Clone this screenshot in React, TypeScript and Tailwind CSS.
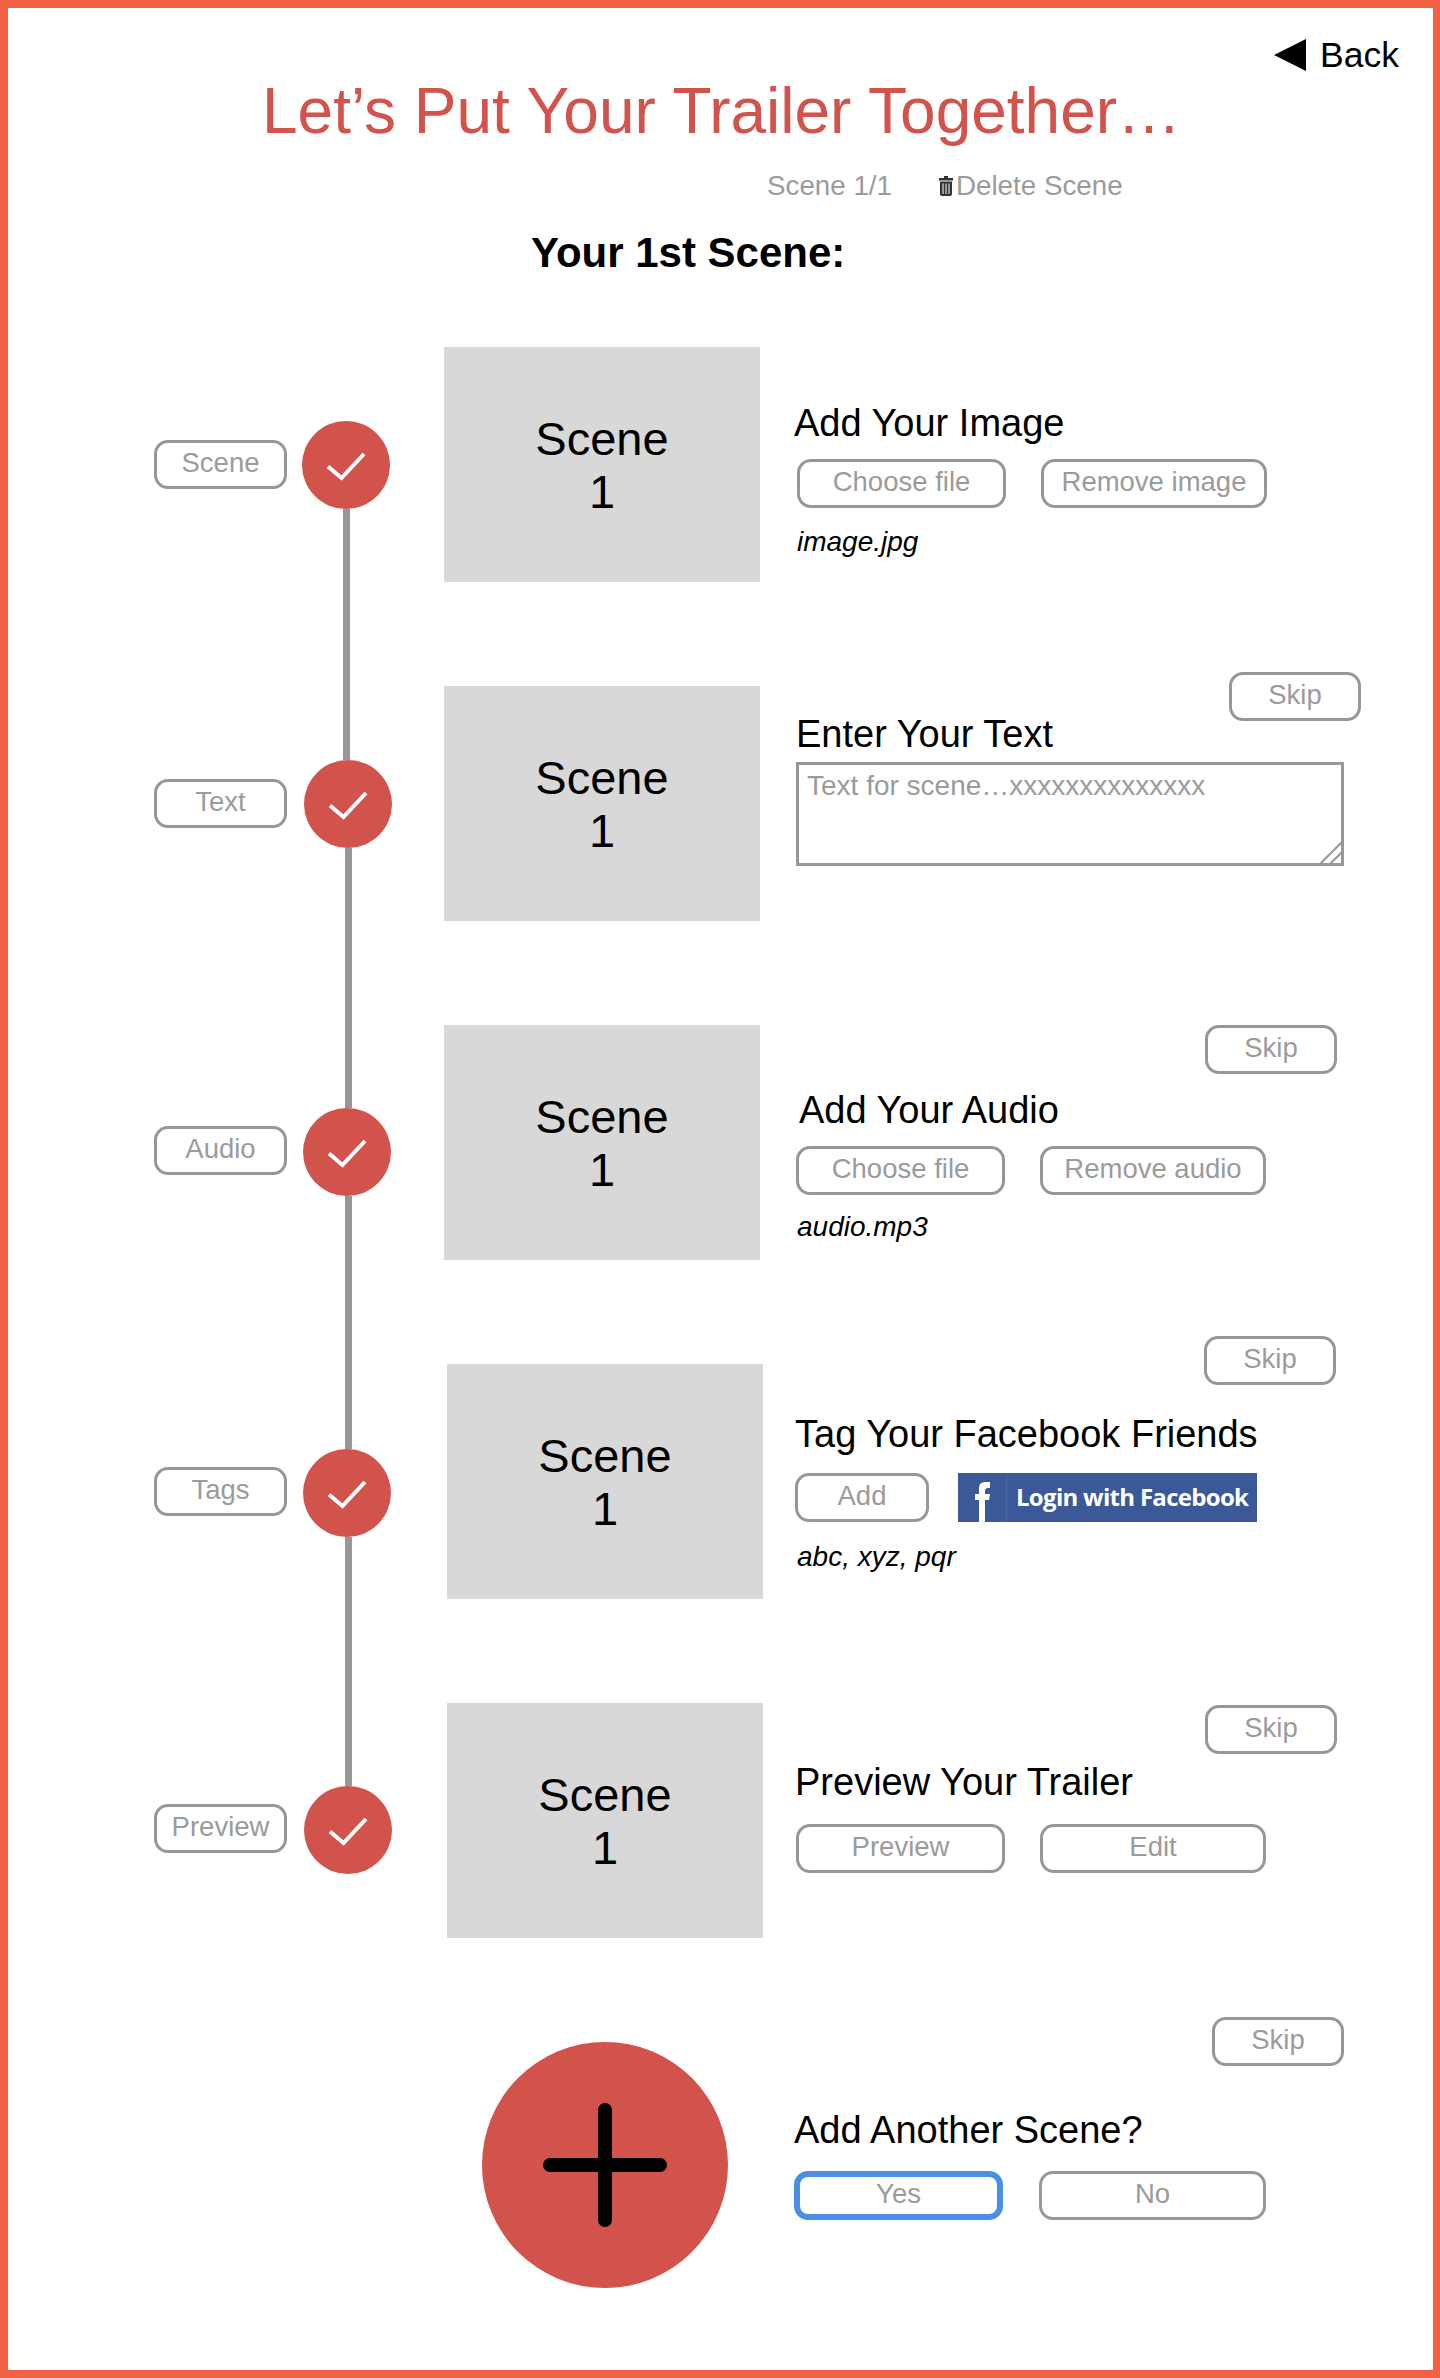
import type { ReactNode } from "react";

function Btn({ className = "border-[3px] border-[#979797] pb-[3px]", width, children }: { className?: string; width: string; children: ReactNode }) {
  return (
    <button className={`flex h-[49px] shrink-0 items-center justify-center rounded-[14px] text-[27.5px] leading-none text-[#9b9b9b] ${width} ${className}`}>
      {children}
    </button>
  );
}

function Heading({ className = "", children }: { className?: string; children: ReactNode }) {
  return <h3 className={`text-[38px] leading-[35px] whitespace-nowrap text-black ${className}`}>{children}</h3>;
}

function FileName({ className = "", children }: { className?: string; children: ReactNode }) {
  return <p className={`text-[28px] leading-[28px] italic text-black ${className}`}>{children}</p>;
}

function Thumb({ className = "" }: { className?: string }) {
  return (
    <div className={`flex h-[235px] w-[316px] shrink-0 flex-col items-center justify-center bg-[#d8d8d8] text-[47px] leading-[53px] text-black ${className}`}>
      <span>Scene</span>
      <span>1</span>
    </div>
  );
}

// the grey line shifts 2px sideways after the second circle, same as the mockup
function Step({ label, pillTop, lineTop, lineBottom = "ml-[43px]", circleClass = "", last }: { label: string; pillTop: string; lineTop: string; lineBottom?: string; circleClass?: string; last?: boolean }) {
  return (
    <>
      <div className={`ml-[146px] flex h-[49px] w-[133px] shrink-0 items-center justify-center rounded-[14px] border-[3px] border-[#979797] pb-[3px] text-[27.5px] leading-none text-[#9b9b9b] ${pillTop}`}>
        {label}
      </div>
      <div className="ml-[15px] flex h-[339px] w-[88px] shrink-0 flex-col">
        <div className={`w-[7px] shrink-0 ${lineTop}`} />
        <div className={`h-[88px] w-[88px] shrink-0 rounded-full bg-[#d2524c] ${circleClass}`}>
          <svg viewBox="0 0 88 88" className="h-[88px] w-[88px]">
            <path d="M26 45.5 L39.5 57 L62 33" fill="none" stroke="#fff" strokeWidth="4" />
          </svg>
        </div>
        {!last && <div className={`w-[7px] flex-1 bg-[#979797] ${lineBottom}`} />}
      </div>
    </>
  );
}

export default function App() {
  return (
    <div className="h-[2378px] w-full overflow-hidden border-t-8 border-r-[7px] border-b-8 border-l-8 border-[#f26144] bg-white font-['Liberation_Sans',Arial,sans-serif]">
      <header className="pt-[29px]">
        <div className="flex items-center justify-end pr-[34px]">
          <svg viewBox="0 0 32 32" className="mr-[14px] h-[32px] w-[32px]">
            <polygon points="0,16 32,0 32,32" fill="#000" />
          </svg>
          <span className="text-[35.5px] leading-[36px] text-black">Back</span>
        </div>
        <h1 className="mt-[6px] ml-[254px] text-[64px] leading-[64px] whitespace-nowrap text-[#d2524c]">Let’s Put Your Trailer Together…</h1>
        <div className="mt-[29px] ml-[759px] flex items-center text-[27.75px] leading-[28px] text-[#9b9b9b]">
          <span>Scene 1/1</span>
          <svg viewBox="0 0 14 20" className="mr-[3px] ml-[47px] h-[20px] w-[14px]">
            <path d="M5 0h4v2h5v2.5H0V2h5z" fill="#333" />
            <path d="M1 5.5h12V18a2 2 0 0 1-2 2H3a2 2 0 0 1-2-2z" fill="#333" />
            <path d="M4 7.5v10.5M7 7.5v10.5M10 7.5v10.5" stroke="#fff" strokeWidth="1" />
          </svg>
          <span>Delete Scene</span>
        </div>
        <h2 className="mt-[33px] ml-[523px] text-[42px] leading-[40px] font-bold text-black">Your 1st Scene:</h2>
      </header>

      <main className="mt-[74px]">
        <section className="flex h-[339px] items-start">
          <Step label="Scene" pillTop="mt-[93px]" lineTop="h-[74px]" lineBottom="ml-[41px]" />
          <Thumb className="ml-[54px]" />
          <div className="mt-[59px] ml-[34px]">
            <Heading>Add Your Image</Heading>
            <div className="mt-[18px] ml-[3px] flex">
              <Btn width="w-[209px]">Choose file</Btn>
              <Btn width="ml-[35px] w-[226px]">Remove image</Btn>
            </div>
            <FileName className="mt-[20px] ml-[3px]">image.jpg</FileName>
          </div>
        </section>

        <section className="flex h-[339px] items-start">
          <Step label="Text" pillTop="mt-[93px]" lineTop="ml-[41px] h-[74px] bg-[#979797]" circleClass="translate-x-[2px]" />
          <Thumb className="ml-[54px]" />
          <div className="-mt-[14px] ml-[36px]">
            <Btn width="ml-[433px] w-[132px]">Skip</Btn>
            <Heading className="-mt-[4px]">Enter Your Text</Heading>
            <div className="relative mt-[10px] h-[104px] w-[548px] border-[3px] border-[#979797] px-[8px] pt-[5px] text-[28px] leading-[32px] text-[#9b9b9b]">
              Text for scene…xxxxxxxxxxxxxx
              <svg viewBox="0 0 26 26" className="absolute -right-[3px] -bottom-[3px] h-[26px] w-[26px]">
                <path d="M0 26 L26 0 M10 26 L26 10" stroke="#979797" strokeWidth="2" />
              </svg>
            </div>
          </div>
        </section>

        <section className="flex h-[339px] items-start">
          <Step label="Audio" pillTop="mt-[101px]" lineTop="ml-[43px] h-[83px] bg-[#979797]" circleClass="translate-x-[1px]" />
          <Thumb className="ml-[54px]" />
          <div className="ml-[39px]">
            <Btn width="ml-[406px] w-[132px]">Skip</Btn>
            <Heading className="mt-[19px]">Add Your Audio</Heading>
            <div className="mt-[18px] -ml-[3px] flex">
              <Btn width="w-[209px]">Choose file</Btn>
              <Btn width="ml-[35px] w-[226px]">Remove audio</Btn>
            </div>
            <FileName className="mt-[18px] -ml-[2px]">audio.mp3</FileName>
          </div>
        </section>

        <section className="flex h-[339px] items-start">
          <Step label="Tags" pillTop="mt-[103px]" lineTop="ml-[43px] h-[85px] bg-[#979797]" circleClass="translate-x-[1px]" />
          <Thumb className="ml-[57px]" />
          <div className="-mt-[28px] ml-[32px]">
            <Btn width="ml-[409px] w-[132px]">Skip</Btn>
            <Heading className="mt-[32px]">Tag Your Facebook Friends</Heading>
            <div className="mt-[21px] flex">
              <Btn width="w-[134px]">Add</Btn>
              <button className="ml-[29px] flex h-[49px] w-[299px] items-stretch bg-[#3b5998] text-white">
                <span className="w-[49px] shrink-0 border-r border-[#4a67a4]">
                  <svg viewBox="0 0 48 49" className="h-[49px] w-[48px]">
                    <path d="M21 49V27h-4v-6h4v-5c0-5 2-7 7-7h4v6h-2c-2 0-3 1-3 3v3h5l-1 6h-4v22z" fill="#fff" />
                  </svg>
                </span>
                <span className="flex-1 pl-[9px] text-left font-['Open_Sans',sans-serif] text-[24px] leading-[48px] font-bold tracking-[-0.7px] whitespace-nowrap">Login with Facebook</span>
              </button>
            </div>
            <FileName className="mt-[21px] ml-[2px]">abc, xyz, pqr</FileName>
          </div>
        </section>

        <section className="flex h-[339px] items-start">
          <Step label="Preview" pillTop="mt-[101px]" lineTop="ml-[43px] h-[83px] bg-[#979797]" circleClass="translate-x-[2px]" last />
          <Thumb className="ml-[57px]" />
          <div className="mt-[2px] ml-[32px]">
            <Btn width="ml-[410px] w-[132px]">Skip</Btn>
            <Heading className="mt-[11px]">Preview Your Trailer</Heading>
            <div className="mt-[24px] ml-[1px] flex">
              <Btn width="w-[209px]">Preview</Btn>
              <Btn width="ml-[35px] w-[226px]">Edit</Btn>
            </div>
          </div>
        </section>

        <section className="flex items-start">
          <div className="ml-[474px] h-[246px] w-[246px] shrink-0 rounded-full bg-[#d2524c]">
            <svg viewBox="0 0 246 246" className="h-[246px] w-[246px]">
              <rect x="61" y="116" width="124" height="14" rx="7" fill="#000" />
              <rect x="116" y="61" width="14" height="124" rx="7" fill="#000" />
            </svg>
          </div>
          <div className="-mt-[25px] ml-[66px]">
            <Btn width="ml-[418px] w-[132px]">Skip</Btn>
            <Heading className="mt-[47px]">Add Another Scene?</Heading>
            <div className="mt-[23px] flex">
              <Btn width="w-[209px]" className="border-[6px] border-[#4a90e2] pb-[3px]">Yes</Btn>
              <Btn width="ml-[36px] w-[227px]">No</Btn>
            </div>
          </div>
        </section>
      </main>
    </div>
  );
}
